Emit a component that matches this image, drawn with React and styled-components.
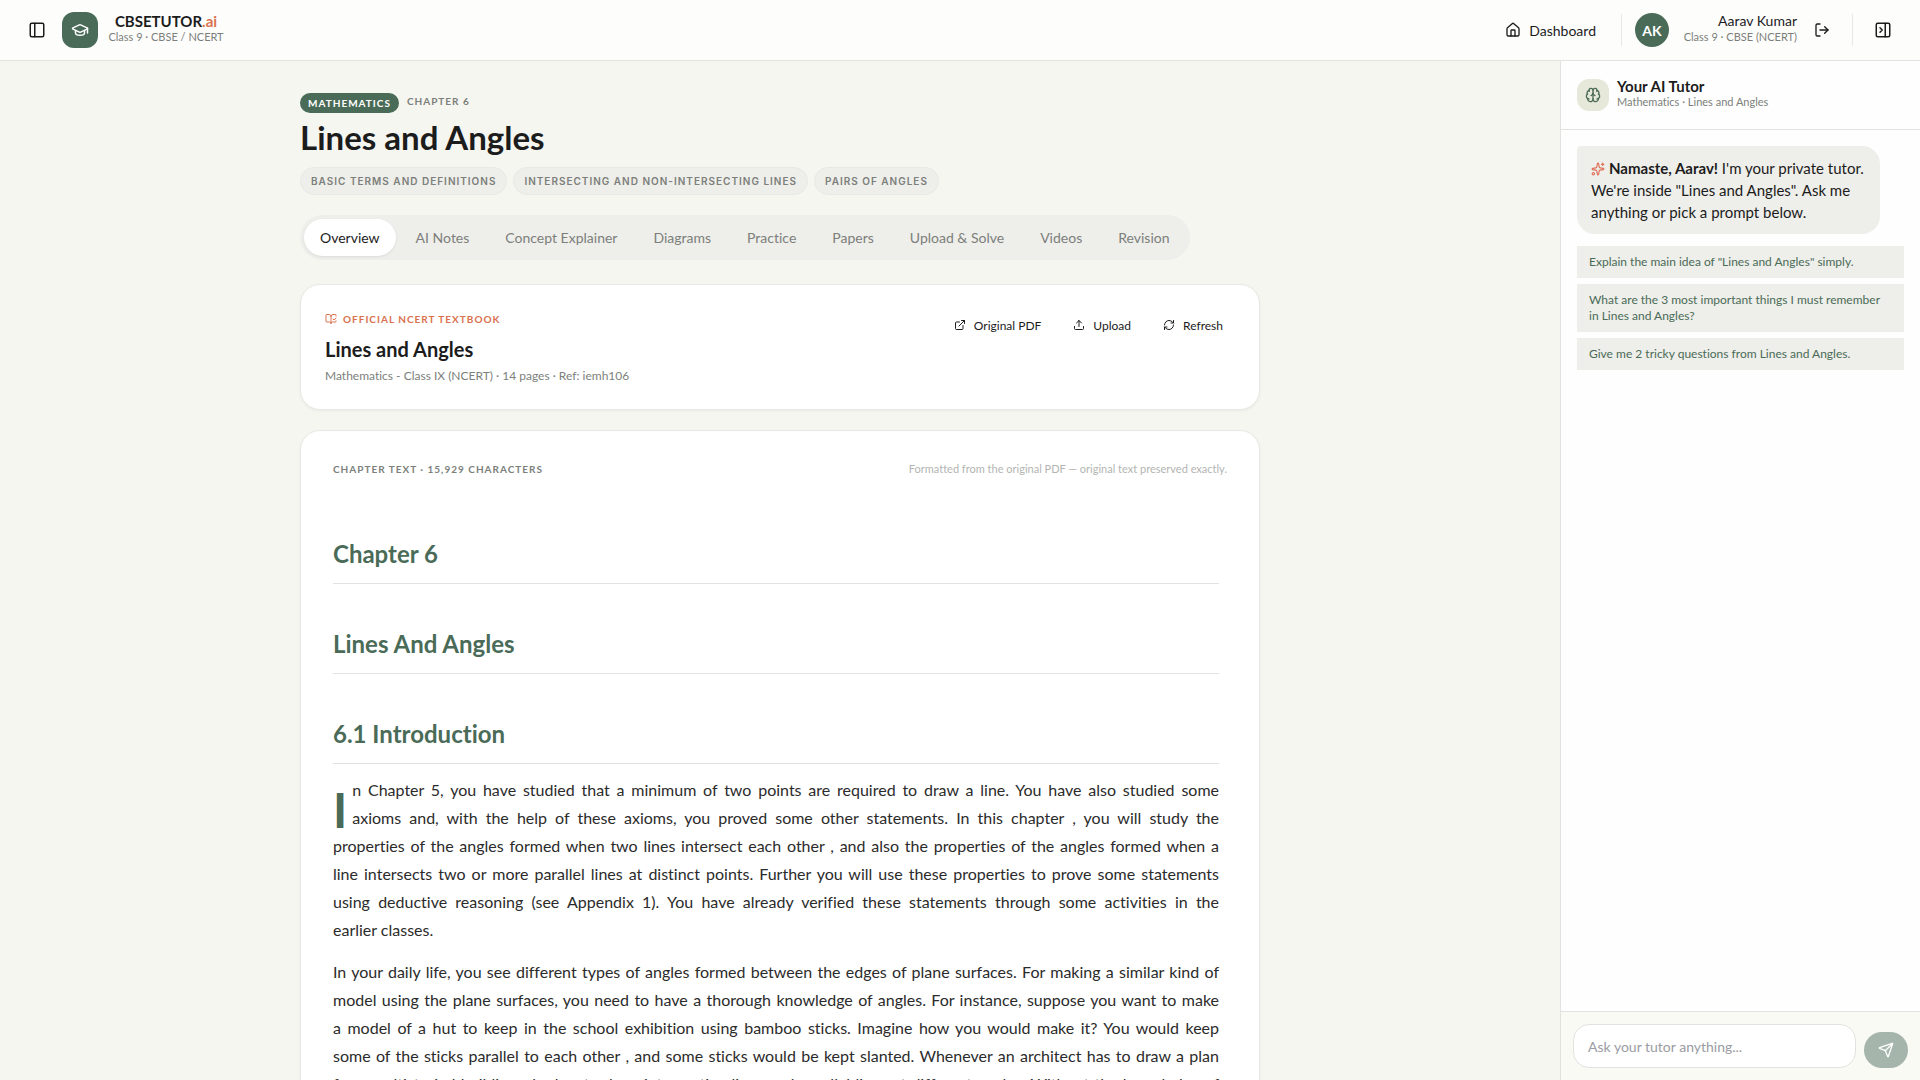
import React from 'react';
import styled, { createGlobalStyle } from 'styled-components';
import {
  BookOpenCheck,
  Brain,
  ExternalLink,
  GraduationCap,
  House,
  LogOut,
  PanelLeft,
  PanelRightClose,
  RefreshCw,
  Send,
  Sparkles,
  Upload,
} from 'lucide-react';

const topics = [
  'Basic terms and definitions',
  'Intersecting and non-intersecting lines',
  'Pairs of angles',
];

const tabs = [
  'Overview',
  'AI Notes',
  'Concept Explainer',
  'Diagrams',
  'Practice',
  'Papers',
  'Upload & Solve',
  'Videos',
  'Revision',
];

const prompts = [
  'Explain the main idea of "Lines and Angles" simply.',
  'What are the 3 most important things I must remember in Lines and Angles?',
  'Give me 2 tricky questions from Lines and Angles.',
];

// line breaks follow the printed chapter
const intro = [
  'In Chapter 5, you have studied that a minimum of two points are required to draw a line. You have also studied some',
  'axioms and, with the help of these axioms, you proved some other statements. In this chapter , you will study the',
  'properties of the angles formed when two lines intersect each other , and also the properties of the angles formed when a',
  'line intersects two or more parallel lines at distinct points. Further you will use these properties to prove some statements',
  'using deductive reasoning (see Appendix 1). You have already verified these statements through some activities in the',
  'earlier classes.',
];

const dailyLife = [
  'In your daily life, you see different types of angles formed between the edges of plane surfaces. For making a similar kind of',
  'model using the plane surfaces, you need to have a thorough knowledge of angles. For instance, suppose you want to make',
  'a model of a hut to keep in the school exhibition using bamboo sticks. Imagine how you would make it? You would keep',
  'some of the sticks parallel to each other , and some sticks would be kept slanted. Whenever an architect has to draw a plan',
  'for a multistoried building, she has to draw intersecting lines and parallel lines at different angles. Without the knowledge of',
  'the properties of these lines and angles, do you think she can draw the layout of the building?',
];

export default function App() {
  return (
    <>
      <GlobalStyle />
      <Page>
        <TopBar />
        <Body>
          <Chapter />
          <Tutor />
        </Body>
      </Page>
    </>
  );
}

function TopBar() {
  return (
    <Header>
      <HeaderSide>
        <IconButton aria-label="Toggle sidebar">
          <PanelLeft size={18} />
        </IconButton>
        <Logo>
          <GraduationCap size={18} />
        </Logo>
        <Identity $align="center">
          <Brand>
            CBSETUTOR<span>.ai</span>
          </Brand>
          <Small>Class 9 · CBSE / NCERT</Small>
        </Identity>
      </HeaderSide>
      <HeaderSide>
        <NavLink href="#dashboard">
          <House size={16} />
          Dashboard
        </NavLink>
        <Divider />
        <Avatar>AK</Avatar>
        <Identity $align="right">
          <UserName>Aarav Kumar</UserName>
          <Small>Class 9 · CBSE (NCERT)</Small>
        </Identity>
        <IconButton aria-label="Log out">
          <LogOut size={16} />
        </IconButton>
        <Divider />
        <IconButton aria-label="Close tutor">
          <PanelRightClose size={18} />
        </IconButton>
      </HeaderSide>
    </Header>
  );
}

function Chapter() {
  return (
    <Main>
      <Content>
        <Crumbs>
          <Subject>Mathematics</Subject>
          <Label>Chapter 6</Label>
        </Crumbs>
        <Title>Lines and Angles</Title>
        <Topics>
          {topics.map((topic) => (
            <Topic key={topic}>{topic}</Topic>
          ))}
        </Topics>
        <Tabs role="tablist">
          {tabs.map((tab, i) => (
            <Tab key={tab} role="tab" aria-selected={i === 0} $active={i === 0}>
              {tab}
            </Tab>
          ))}
        </Tabs>
        <BookCard>
          <div>
            <Source>
              <BookOpenCheck size={12} />
              Official NCERT Textbook
            </Source>
            <BookTitle>Lines and Angles</BookTitle>
            <BookMeta>Mathematics - Class IX (NCERT) · 14 pages · Ref: iemh106</BookMeta>
          </div>
          <Actions>
            <ActionLink href="#pdf">
              <ExternalLink size={12} />
              Original PDF
            </ActionLink>
            <ActionButton>
              <Upload size={12} />
              Upload
            </ActionButton>
            <ActionButton>
              <RefreshCw size={12} />
              Refresh
            </ActionButton>
          </Actions>
        </BookCard>
        <TextCard>
          <TextHead>
            <Label>Chapter text · 15,929 characters</Label>
            <Note>Formatted from the original PDF — original text preserved exactly.</Note>
          </TextHead>
          <Article>
            <Heading>Chapter 6</Heading>
            <Heading>Lines And Angles</Heading>
            <Heading>6.1 Introduction</Heading>
            <Paragraph $dropCap>
              {intro.map((line) => (
                <Line key={line}>{line}</Line>
              ))}
            </Paragraph>
            <Paragraph>
              {dailyLife.map((line) => (
                <Line key={line}>{line}</Line>
              ))}
            </Paragraph>
          </Article>
        </TextCard>
      </Content>
    </Main>
  );
}

function Tutor() {
  return (
    <Panel>
      <PanelHead>
        <PanelIcon>
          <Brain size={16} />
        </PanelIcon>
        <Identity $align="left">
          <PanelTitle>Your AI Tutor</PanelTitle>
          <Small>Mathematics · Lines and Angles</Small>
        </Identity>
      </PanelHead>
      <Chat>
        <Bubble>
          <Sparkles size={14} />
          <b>Namaste, Aarav!</b> I'm your private tutor. We're inside "Lines and Angles". Ask me
          anything or pick a prompt below.
        </Bubble>
        {prompts.map((prompt) => (
          <Prompt key={prompt}>{prompt}</Prompt>
        ))}
      </Chat>
      <Composer>
        <Input aria-label="Ask your tutor" placeholder="Ask your tutor anything..." />
        <SendButton aria-label="Send">
          <Send size={16} />
        </SendButton>
      </Composer>
    </Panel>
  );
}

const GlobalStyle = createGlobalStyle`
  * {
    box-sizing: border-box;
  }
  body {
    margin: 0;
    background: #f6f6f1;
    color: #1c1c1c;
    font-family: Lato, 'Open Sans', sans-serif;
    font-size: 14px;
    font-variant-ligatures: none;
  }
  h1, h2, h3, p {
    margin: 0;
  }
  button, input {
    font-family: inherit;
    font-variant-ligatures: inherit;
  }
  button {
    border: 0;
    padding: 0;
    background: none;
    color: inherit;
    cursor: pointer;
  }
  a {
    color: inherit;
    text-decoration: none;
  }
  svg {
    flex-shrink: 0;
  }
`;

const Page = styled.div`
  display: flex;
  flex-direction: column;
  height: 100vh;
`;

const Header = styled.header`
  display: flex;
  justify-content: space-between;
  align-items: center;
  height: 61px;
  flex-shrink: 0;
  padding: 0 20px;
  background: #fdfdfc;
  border-bottom: 1px solid #e2e3df;
`;

const HeaderSide = styled.div`
  display: flex;
  align-items: center;
  gap: 8px;
`;

const IconButton = styled.button`
  display: flex;
  align-items: center;
  justify-content: center;
  width: 34px;
  height: 34px;
`;

const Logo = styled.div`
  display: flex;
  align-items: center;
  justify-content: center;
  width: 36px;
  height: 36px;
  border-radius: 12px;
  background: #4a6b57;
  color: #fff;
`;

const Identity = styled.div`
  min-width: 120px;
  padding-bottom: 4px;
  text-align: ${(props) => props.$align};
`;

const Brand = styled.div`
  font-size: 15px;
  line-height: 18px;
  font-weight: 700;
  span {
    color: #d9714f;
  }
`;

const Small = styled.div`
  font-size: 11px;
  line-height: 14px;
  color: #7c7f7b;
`;

const NavLink = styled.a`
  display: flex;
  align-items: center;
  gap: 8px;
  padding: 0 12px;
`;

const Divider = styled.div`
  width: 1px;
  height: 32px;
  margin: 0 5px;
  background: #e8e9e5;
`;

const Avatar = styled.div`
  display: flex;
  align-items: center;
  justify-content: center;
  width: 34px;
  height: 34px;
  border-radius: 50%;
  background: #4a6b57;
  color: #fff;
  font-weight: 700;
`;

const UserName = styled.div`
  line-height: 18px;
`;

const Body = styled.div`
  display: flex;
  flex: 1;
  min-height: 0;
`;

const Main = styled.main`
  flex: 1;
  min-width: 0;
  padding: 32px 24px 0;
  overflow: hidden;
`;

const Content = styled.div`
  max-width: 960px;
  margin: 0 auto;
`;

const Crumbs = styled.div`
  display: flex;
  gap: 8px;
`;

const Label = styled.div`
  font-size: 10px;
  line-height: 16px;
  font-weight: 700;
  letter-spacing: 1px;
  text-transform: uppercase;
  color: #7c7f7b;
`;

const Subject = styled(Label)`
  padding: 2px 8px;
  border-radius: 10px;
  background: #4a6b57;
  color: #fff;
`;

const Title = styled.h1`
  margin-top: 4px;
  font-size: 33px;
  line-height: 40px;
  font-weight: 700;
`;

const Topics = styled.div`
  display: flex;
  flex-wrap: wrap;
  gap: 6px;
  margin-top: 10px;
`;

const Topic = styled(Label)`
  padding: 5px 10px;
  border: 1px solid #e8e9e5;
  border-radius: 14px;
  background: #eeeeea;
  font-family: Inter, sans-serif;
  font-weight: 600;
`;

const Tabs = styled.div`
  display: inline-flex;
  gap: 4px;
  margin-top: 20px;
  padding: 4px;
  border-radius: 23px;
  background: #eeeeea;
`;

const Tab = styled.button`
  height: 37px;
  padding: 0 16px;
  border-radius: 19px;
  font-size: 14px;
  background: ${(props) => (props.$active ? '#fff' : 'transparent')};
  color: ${(props) => (props.$active ? '#1c1c1c' : '#7c7f7b')};
  box-shadow: ${(props) => (props.$active ? '0 1px 3px rgba(0, 0, 0, 0.08)' : 'none')};
`;

const Card = styled.section`
  border: 1px solid #e8e9e5;
  border-radius: 20px;
  background: #fff;
  box-shadow: 0 1px 3px rgba(0, 0, 0, 0.05);
`;

const BookCard = styled(Card)`
  display: flex;
  justify-content: space-between;
  margin-top: 24px;
  padding: 24px;
`;

const Source = styled(Label)`
  display: flex;
  align-items: center;
  gap: 6px;
  line-height: 20px;
  color: #d9714f;
`;

const BookTitle = styled.h2`
  margin-top: 6px;
  font-size: 20px;
  line-height: 28px;
  font-weight: 700;
`;

const BookMeta = styled.p`
  margin-top: 4px;
  font-size: 12px;
  line-height: 18px;
  color: #7c7f7b;
`;

const Actions = styled.div`
  display: flex;
  gap: 8px;
`;

const ActionButton = styled.button`
  display: flex;
  align-items: center;
  gap: 8px;
  height: 32px;
  padding: 0 12px;
  font-size: 12px;
`;

const ActionLink = styled(ActionButton).attrs({ as: 'a' })``;

const TextCard = styled(Card)`
  margin-top: 20px;
  padding: 30px 32px;
`;

const TextHead = styled.div`
  display: flex;
  justify-content: space-between;
`;

const Note = styled.div`
  font-size: 11px;
  line-height: 16px;
  color: #b3b5b2;
`;

const Article = styled.article`
  padding: 29px 8px 0 0;
`;

const Heading = styled.h3`
  padding: 32px 0 14px;
  margin-bottom: 12px;
  border-bottom: 1px solid #e2e3df;
  font-size: 24px;
  line-height: 31px;
  font-weight: 700;
  color: #4a6b57;
`;

const Paragraph = styled.p`
  margin-bottom: 14px;
  font-size: 16px;
  line-height: 28px;
  color: #2b2b2b;
  &::first-letter {
    ${(props) =>
      props.$dropCap &&
      `
      float: left;
      padding: 12px 5px 0 0;
      font-size: 48px;
      line-height: 44px;
      font-weight: 700;
      color: #4a6b57;
    `}
  }
`;

const Line = styled.span`
  display: block;
  text-align: justify;
  text-align-last: justify;
  &:last-child {
    text-align-last: left;
  }
`;

const Panel = styled.aside`
  display: flex;
  flex-direction: column;
  width: 360px;
  flex-shrink: 0;
  border-left: 1px solid #e2e3df;
  background: #fefefe;
`;

const PanelHead = styled.div`
  display: flex;
  align-items: center;
  gap: 8px;
  padding: 16px;
  height: 69px;
  border-bottom: 1px solid #e2e3df;
`;

const PanelIcon = styled.div`
  display: flex;
  align-items: center;
  justify-content: center;
  width: 32px;
  height: 32px;
  border-radius: 12px;
  background: #e6e8d9;
  color: #4a6b57;
`;

const PanelTitle = styled.h2`
  font-size: 15px;
  line-height: 18px;
  font-weight: 700;
`;

const Chat = styled.div`
  display: flex;
  flex-direction: column;
  flex: 1;
  gap: 6px;
  padding: 16px;
`;

const Bubble = styled.div`
  max-width: 303px;
  margin-bottom: 6px;
  padding: 11px 14px;
  border-radius: 4px 18px 18px 18px;
  background: #eeeeea;
  font-size: 15px;
  line-height: 22px;
  svg {
    margin-right: 4px;
    color: #e0705a;
    vertical-align: -2px;
  }
`;

const Prompt = styled.button`
  padding: 8px 16px 8px 12px;
  background: #eeeeea;
  font-size: 12px;
  line-height: 16px;
  text-align: left;
  color: #4a6b57;
`;

const Composer = styled.div`
  display: flex;
  align-items: flex-end;
  gap: 8px;
  padding: 12px;
  border-top: 1px solid #e2e3df;
  background: #fafaf5;
`;

const Input = styled.input`
  flex: 1;
  min-width: 0;
  height: 44px;
  padding: 0 14px;
  border: 1px solid #e2e3df;
  border-radius: 16px;
  background: #fff;
  font-size: 14px;
  &::placeholder {
    color: #9a9ca3;
  }
`;

const SendButton = styled.button`
  display: flex;
  align-items: center;
  justify-content: center;
  width: 44px;
  height: 36px;
  border-radius: 18px;
  background: #a5b5ab;
  color: #fff;
`;
